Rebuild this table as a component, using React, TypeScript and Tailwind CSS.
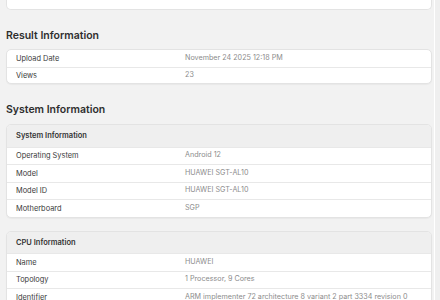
import React from "react";

type Row = [string, string];

function Card({ header, rows, rowH }: { header?: string; rows: Row[]; rowH: string }) {
  return (
    <div className="shrink-0 bg-white border border-[#e3e3e3] rounded-[5px] overflow-hidden shadow-[0_1px_1px_rgba(0,0,0,0.04)]">
      {header && (
        <div className="h-[21.5px] bg-[#efefef] flex items-center pl-[9px] text-[7.5px] font-semibold text-[#333]">
          {header}
        </div>
      )}
      {rows.map(([k, v], i) => (
        <div
          key={k}
          className={`${rowH} flex items-center ${i > 0 || header ? "border-t border-[#e8e8e8]" : ""}`}
        >
          <div className="w-[169px] pl-[9px] text-[7.4px] text-[#3a3a3a] shrink-0">{k}</div>
          <div className="pl-[9px] text-[7.2px] text-[#8c8c8c] whitespace-nowrap">{v}</div>
        </div>
      ))}
    </div>
  );
}

export default function App() {
  return (
    <div
      className="w-[440px] h-[300px] overflow-hidden bg-[#f2f2f2] flex"
      style={{ fontFamily: "Inter, 'Liberation Sans', sans-serif" }}
    >
      <div className="flex-1 pl-[6px] pr-[1px] flex flex-col">
        <div className="h-[10px] bg-white border-x border-b border-[#e3e3e3] rounded-b-[5px] shrink-0" />
        <div className="h-[39px] flex items-center text-[10.5px] font-semibold text-[#2e2e2e] shrink-0 pt-[13px]">
          Result Information
        </div>
        <Card
          rowH="h-[16.5px]"
          rows={[
            ["Upload Date", "November 24 2025 12:18 PM"],
            ["Views", "23"],
          ]}
        />
        <div className="h-[40px] flex items-center text-[10.5px] font-semibold text-[#2e2e2e] shrink-0 pt-[12px]">
          System Information
        </div>
        <Card
          rowH="h-[17.5px]"
          header="System Information"
          rows={[
            ["Operating System", "Android 12"],
            ["Model", "HUAWEI SGT-AL10"],
            ["Model ID", "HUAWEI SGT-AL10"],
            ["Motherboard", "SGP"],
          ]}
        />
        <div className="h-[13px] shrink-0" />
        <Card
          rowH="h-[17.5px]"
          header="CPU Information"
          rows={[
            ["Name", "HUAWEI"],
            ["Topology", "1 Processor, 9 Cores"],
            ["Identifier", "ARM implementer 72 architecture 8 variant 2 part 3334 revision 0"],
          ]}
        />
      </div>
      <div className="w-[6px] shrink-0 border-l border-white bg-[#efefef] ml-[1px]" />
    </div>
  );
}
